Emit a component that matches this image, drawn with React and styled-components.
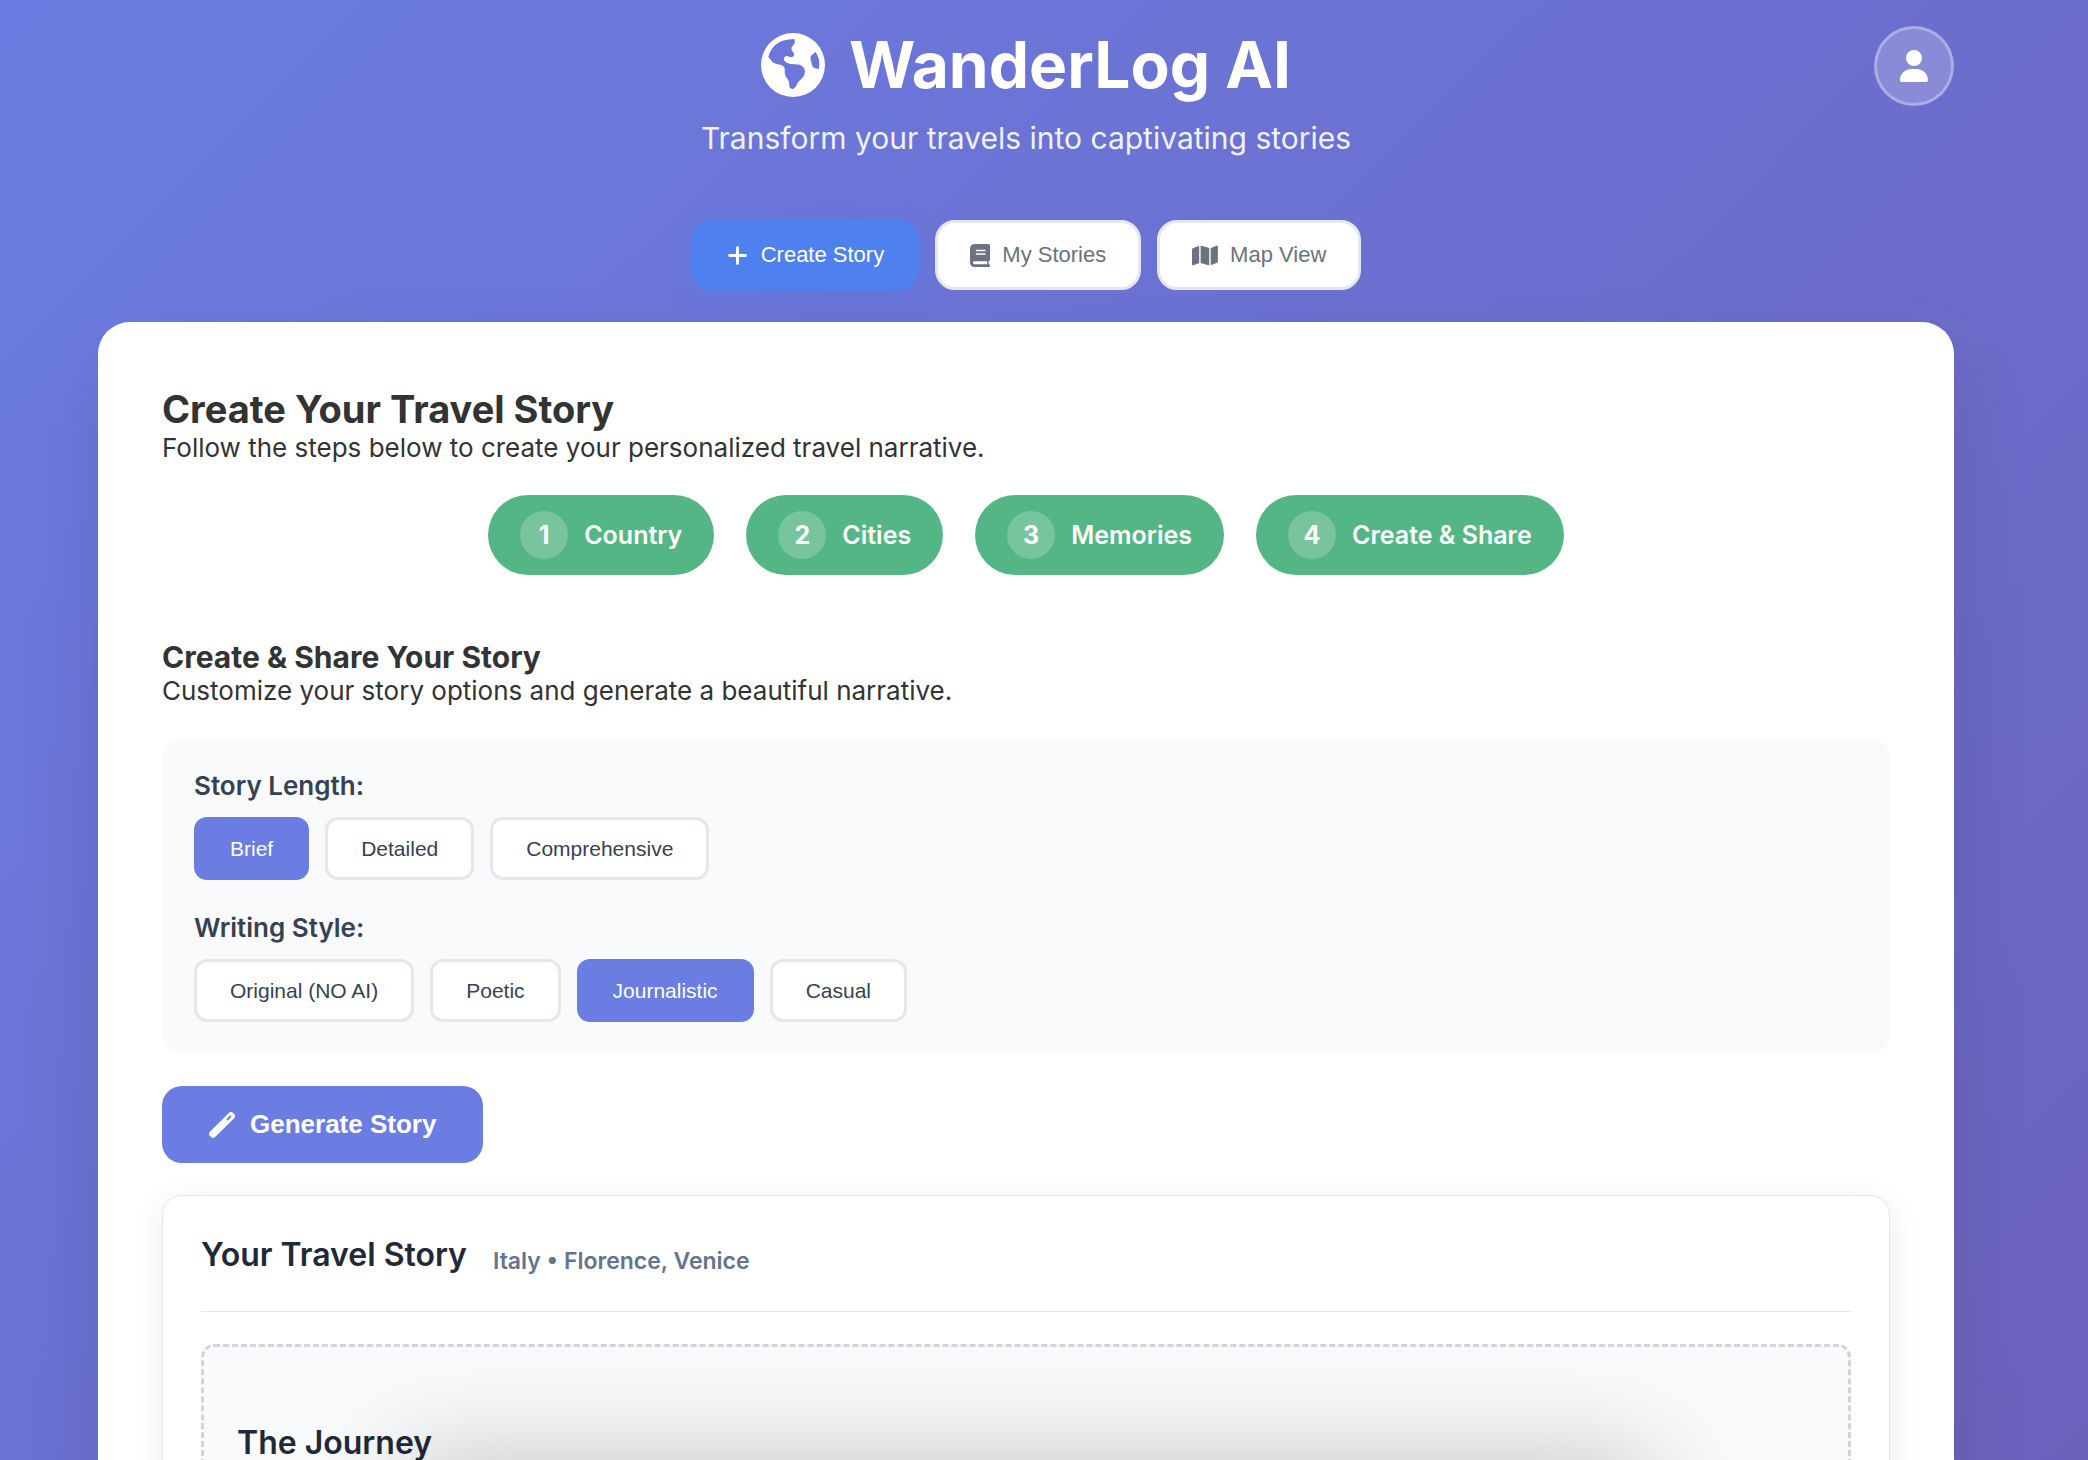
import React, { useState } from "react";
import styled, { createGlobalStyle } from "styled-components";
import { FaPlus, FaUser } from "react-icons/fa6";

const GlobalStyle = createGlobalStyle`
  * { box-sizing: border-box; margin: 0; padding: 0; }
  body {
    height: 100vh;
    overflow: hidden;
    color: #333;
    font-family: Inter, "Liberation Sans", sans-serif;
    font-size: 26px;
    line-height: 32px;
    background: linear-gradient(135deg, #6b7de2 0%, #6c4ea0 100%) 0 0 / 100% 4080px no-repeat;
  }
`;

const Page = styled.div`
  padding: 26px 134px 0 98px;
`;

const Header = styled.header`
  display: grid;
  grid-template-columns: 80px 1fr 80px;
  justify-items: center;
  margin-bottom: 64px;
  color: #fff;
`;

const Brand = styled.div`
  grid-column: 2;
  text-align: center;
`;

const Title = styled.h1`
  display: flex;
  align-items: center;
  justify-content: center;
  gap: 24px;
  font-size: 64px;
  line-height: 78px;
  font-weight: 700;
`;

const Tagline = styled.p`
  margin-top: 16px;
  font-size: 30px;
  line-height: 36px;
  font-weight: 400;
  opacity: 0.9;
`;

const Avatar = styled.button`
  display: grid;
  place-items: center;
  width: 80px;
  height: 80px;
  border: 3px solid rgba(255, 255, 255, 0.3);
  border-radius: 50%;
  background: rgba(255, 255, 255, 0.2);
  color: #fff;
  font-size: 32px;
`;

const Nav = styled.nav`
  display: flex;
  justify-content: center;
  gap: 16px;
  margin-bottom: 32px;
`;

const NavButton = styled.button`
  display: flex;
  align-items: center;
  gap: 12px;
  height: 70px;
  padding: 0 32px;
  border: 3px solid ${(p) => (p.$active ? "#4f81ee" : "#e5e7eb")};
  border-radius: 20px;
  background: ${(p) => (p.$active ? "#4f81ee" : "#fff")};
  box-shadow: ${(p) => (p.$active ? "0 8px 24px rgba(79, 129, 238, 0.3)" : "none")};
  color: ${(p) => (p.$active ? "#fff" : "#6b7280")};
  font: 500 22px "Liberation Sans", Arial, sans-serif;

  svg {
    width: auto;
    height: 23px;
  }
`;

const Panel = styled.main`
  min-height: 1400px;
  padding: 64px;
  border-radius: 32px;
  background: #fff;
  box-shadow: 0 40px 80px rgba(0, 0, 0, 0.11);
`;

const Heading = styled.h2`
  font-size: 38px;
  line-height: 46px;
`;

const Steps = styled.ol`
  display: flex;
  justify-content: center;
  gap: 32px;
  margin: 31px 0 64px;
  list-style: none;
`;

const Step = styled.li`
  display: flex;
  align-items: center;
  gap: 16px;
  height: 80px;
  padding: 0 32px;
  border-radius: 40px;
  background: #55b685;
  color: #fff;
  font-size: 25px;
  font-weight: 600;
`;

const StepNumber = styled.span`
  display: grid;
  place-items: center;
  width: 48px;
  height: 48px;
  border-radius: 50%;
  background: rgba(255, 255, 255, 0.2);
  font-weight: 700;
`;

const SubHeading = styled.h3`
  font-size: 30px;
  line-height: 36px;
`;

const Options = styled.section`
  display: grid;
  gap: 32px;
  margin: 31px 0 32px;
  padding: 32px;
  border-radius: 20px;
  background: #f9fafc;
`;

const OptionGroup = styled.div`
  display: grid;
  gap: 16px;
`;

const OptionLabel = styled.h4`
  color: #374151;
  font-size: 26px;
  line-height: 31px;
  font-weight: 600;
`;

const OptionRow = styled.div`
  display: flex;
  gap: 16px;
`;

const OptionButton = styled.button`
  height: 63px;
  padding: 0 33px;
  border: 3px solid ${(p) => (p.$active ? "#6b7de2" : "#e5e7eb")};
  border-radius: 13px;
  background: ${(p) => (p.$active ? "#6b7de2" : "#fff")};
  color: ${(p) => (p.$active ? "#fff" : "#374151")};
  font: 500 21px "Liberation Sans", Arial, sans-serif;
`;

const GenerateButton = styled.button`
  display: flex;
  align-items: center;
  gap: 15px;
  height: 77px;
  padding: 0 47px;
  border: 0;
  border-radius: 20px;
  background: #6b7de2;
  color: #fff;
  font: 600 26px "Liberation Sans", Arial, sans-serif;
`;

const StoryCard = styled.article`
  min-height: 800px;
  margin-top: 32px;
  padding: 39px 38px;
  border: 1px solid #e5e7eb;
  border-radius: 20px;
  background: #fff;
  box-shadow: 0 8px 32px rgba(0, 0, 0, 0.08);
`;

const StoryHeader = styled.header`
  display: flex;
  align-items: center;
  gap: 26px;
  padding-bottom: 36px;
  border-bottom: 1px solid #e5e7eb;
`;

const StoryTitle = styled.h3`
  color: #1f2937;
  font-size: 32px;
  line-height: 40px;
  font-weight: 600;
`;

const StoryMeta = styled.span`
  padding-top: 12px;
  color: #64748b;
  font-size: 23px;
  line-height: 28px;
  font-weight: 600;
`;

const StoryBody = styled.div`
  min-height: 600px;
  margin-top: 32px;
  padding: 76px 33px;
  border: 3px dashed #d1d5db;
  border-radius: 13px;
  background: #f9fafc;
`;

const FloatingShadow = styled.div`
  position: fixed;
  top: 100%;
  left: 400px;
  right: 436px;
  height: 400px;
  box-shadow: 0 0 100px rgba(0, 0, 0, 0.22);
`;

function GlobeIcon() {
  return (
    <svg viewBox="0 0 512 512" width="64" height="64" fill="currentColor" aria-hidden="true">
      <path
        fillRule="evenodd"
        d="M256 0a256 256 0 1 0 0 512a256 256 0 1 0 0-512z
        M267 48Q275 70 266 86L248 112Q239 128 249 143L262 160Q270 178 257 188Q246 197 232 191L214 185Q199 180 188 194Q178 210 190 226Q205 244 237 248L299 251Q320 252 335 270Q352 286 352 309Q350 335 333 355L303 385Q293 396 287 412Q278 436 260 446Q242 452 230 436Q225 426 225 405Q226 382 210 365Q190 345 190 320V291Q190 266 165 257L120 245Q98 241 85 223L59 192Q66 155 90 121Q125 78 180 60Q220 48 267 48z
        M437 152L408 174Q394 186 396 205L408 258Q413 278 431 282L463 288Q468 256 464 216Q456 180 437 152z"
      />
    </svg>
  );
}

function BookIcon() {
  return (
    <svg viewBox="0 0 448 512" fill="currentColor" aria-hidden="true">
      <path
        fillRule="evenodd"
        d="M96 0H400a48 48 0 0 1 48 48V336a48 48 0 0 1-32 45V448a32 32 0 0 1 0 64H96a96 96 0 0 1-96-96V96A96 96 0 0 1 96 0z
        M96 384a32 32 0 0 0 0 64H384V384z
        M144 128a16 16 0 0 0 0 32H336a16 16 0 0 0 0-32z
        M144 208a16 16 0 0 0 0 32H336a16 16 0 0 0 0-32z"
      />
    </svg>
  );
}

function MapIcon() {
  return (
    <svg viewBox="0 0 576 512" fill="currentColor" aria-hidden="true">
      <path d="M384 476.1L192 421.2V35.9L384 90.8V476.1zM416 474.8V88.4L543.1 37.5c15.8-6.3 32.9 5.3 32.9 22.3V394.6c0 9.8-6 18.6-15.1 22.3L416 474.8zM15.1 95.1L160 37.2V423.6L32.9 474.5C17.1 480.8 0 469.2 0 452.2V117.4c0-9.8 6-18.6 15.1-22.3z" />
    </svg>
  );
}

function WandIcon() {
  return (
    <svg viewBox="0 0 512 512" width="26" height="26" aria-hidden="true">
      <rect x="-64" y="183" width="640" height="146" rx="56" fill="currentColor" transform="rotate(-45 256 256)" />
      <path d="M364 148L424 88" stroke="#6b7de2" strokeWidth="36" strokeLinecap="round" />
    </svg>
  );
}

const NAV = [
  ["Create Story", FaPlus],
  ["My Stories", BookIcon],
  ["Map View", MapIcon],
];
const STEPS = ["Country", "Cities", "Memories", "Create & Share"];
const LENGTHS = ["Brief", "Detailed", "Comprehensive"];
const STYLES = ["Original (NO AI)", "Poetic", "Journalistic", "Casual"];

function OptionPicker({ label, options, value, onChange }) {
  return (
    <OptionGroup role="group" aria-label={label}>
      <OptionLabel>{label}:</OptionLabel>
      <OptionRow>
        {options.map((option) => (
          <OptionButton
            key={option}
            type="button"
            $active={option === value}
            aria-pressed={option === value}
            onClick={() => onChange(option)}
          >
            {option}
          </OptionButton>
        ))}
      </OptionRow>
    </OptionGroup>
  );
}

export default function App() {
  const [view, setView] = useState("Create Story");
  const [length, setLength] = useState("Brief");
  const [style, setStyle] = useState("Journalistic");

  return (
    <>
      <GlobalStyle />
      <Page>
        <Header>
          <Brand>
            <Title>
              <GlobeIcon />
              WanderLog AI
            </Title>
            <Tagline>Transform your travels into captivating stories</Tagline>
          </Brand>
          <Avatar type="button" aria-label="Account">
            <FaUser />
          </Avatar>
        </Header>
        <Nav>
          {NAV.map(([label, Icon]) => (
            <NavButton key={label} type="button" $active={label === view} onClick={() => setView(label)}>
              <Icon aria-hidden />
              {label}
            </NavButton>
          ))}
        </Nav>
        <Panel>
          <Heading>Create Your Travel Story</Heading>
          <p>Follow the steps below to create your personalized travel narrative.</p>
          <Steps>
            {STEPS.map((step, i) => (
              <Step key={step}>
                <StepNumber>{i + 1}</StepNumber>
                {step}
              </Step>
            ))}
          </Steps>
          <SubHeading>Create &amp; Share Your Story</SubHeading>
          <p>Customize your story options and generate a beautiful narrative.</p>
          <Options>
            <OptionPicker label="Story Length" options={LENGTHS} value={length} onChange={setLength} />
            <OptionPicker label="Writing Style" options={STYLES} value={style} onChange={setStyle} />
          </Options>
          <GenerateButton type="button">
            <WandIcon />
            Generate Story
          </GenerateButton>
          <StoryCard>
            <StoryHeader>
              <StoryTitle>Your Travel Story</StoryTitle>
              <StoryMeta>Italy • Florence, Venice</StoryMeta>
            </StoryHeader>
            <StoryBody>
              <StoryTitle>The Journey</StoryTitle>
            </StoryBody>
          </StoryCard>
        </Panel>
      </Page>
      <FloatingShadow />
    </>
  );
}
